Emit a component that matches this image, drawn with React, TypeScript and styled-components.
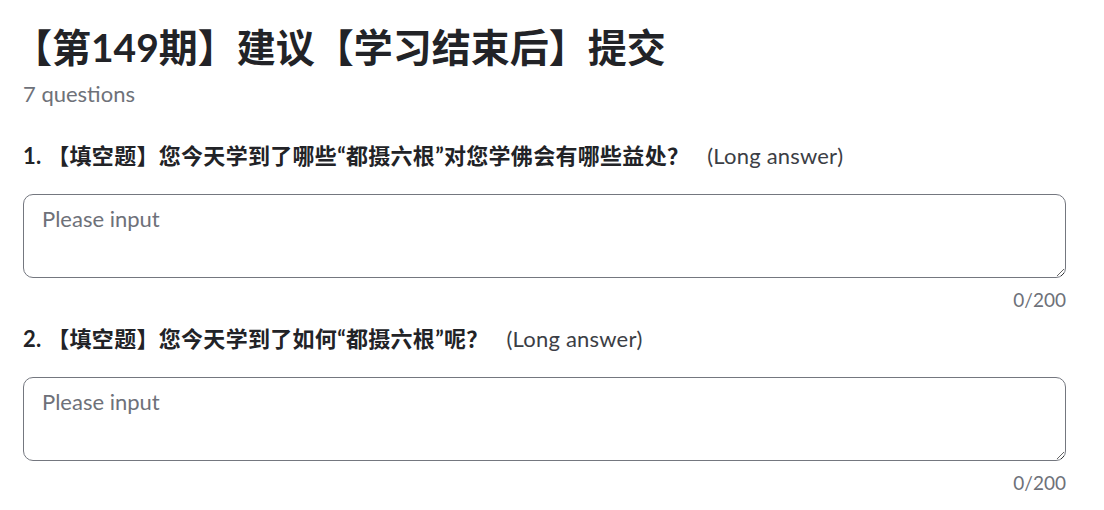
import React, { useState } from "react";
import styled, { createGlobalStyle } from "styled-components";

const GlobalStyle = createGlobalStyle`
  body {
    margin: 0;
    background: #ffffff;
    font-family: Lato, "Noto Sans CJK SC", sans-serif;
  }
`;

const Page = styled.div`
  padding: 24px 38px 0 23px;
`;

const Title = styled.h1`
  margin: 0 0 0 -10px;
  font-size: 39px;
  line-height: 46px;
  font-weight: 700;
  color: #222327;
`;

const Count = styled.div`
  margin-top: 12px;
  font-size: 22px;
  line-height: 24px;
  color: #6e7179;
`;

const Question = styled.div<{ $first?: boolean }>`
  margin-top: ${(p) => (p.$first ? "36px" : "13px")};
`;

const Label = styled.div`
  font-size: 22px;
  line-height: 28px;
  font-weight: 700;
  letter-spacing: 0.3px;
  color: #222327;
  span {
    margin-left: 18px;
    font-weight: 400;
    letter-spacing: 0.2px;
    color: #3b3e45;
  }
`;

const Area = styled.textarea`
  display: block;
  box-sizing: border-box;
  width: 100%;
  height: 84px;
  margin-top: 24px;
  padding: 10px 18px;
  border: 1px solid #74777f;
  border-radius: 10px;
  font-family: Lato, "Noto Sans CJK SC", sans-serif;
  font-size: 22px;
  line-height: 28px;
  color: #222327;
  resize: vertical;
  outline: none;
  &::placeholder {
    color: #6e7179;
  }
`;

const Counter = styled.div`
  margin-top: 10px;
  text-align: right;
  font-size: 19px;
  line-height: 24px;
  color: #6e7179;
`;

const questions = [
  "1. 【填空题】您今天学到了哪些“都摄六根”对您学佛会有哪些益处？",
  "2. 【填空题】您今天学到了如何“都摄六根”呢？",
];

const Field: React.FC<{ title: string; first?: boolean }> = ({ title, first }) => {
  const [value, setValue] = useState("");
  return (
    <Question $first={first}>
      <Label>
        {title}
        <span>(Long answer)</span>
      </Label>
      <Area
        placeholder="Please input"
        maxLength={200}
        value={value}
        onChange={(e) => setValue(e.target.value)}
      />
      <Counter>{value.length}/200</Counter>
    </Question>
  );
};

export default function App() {
  return (
    <Page>
      <GlobalStyle />
      <Title>【第149期】建议【学习结束后】提交</Title>
      <Count>7 questions</Count>
      {questions.map((q, i) => (
        <Field key={i} title={q} first={i === 0} />
      ))}
    </Page>
  );
}
